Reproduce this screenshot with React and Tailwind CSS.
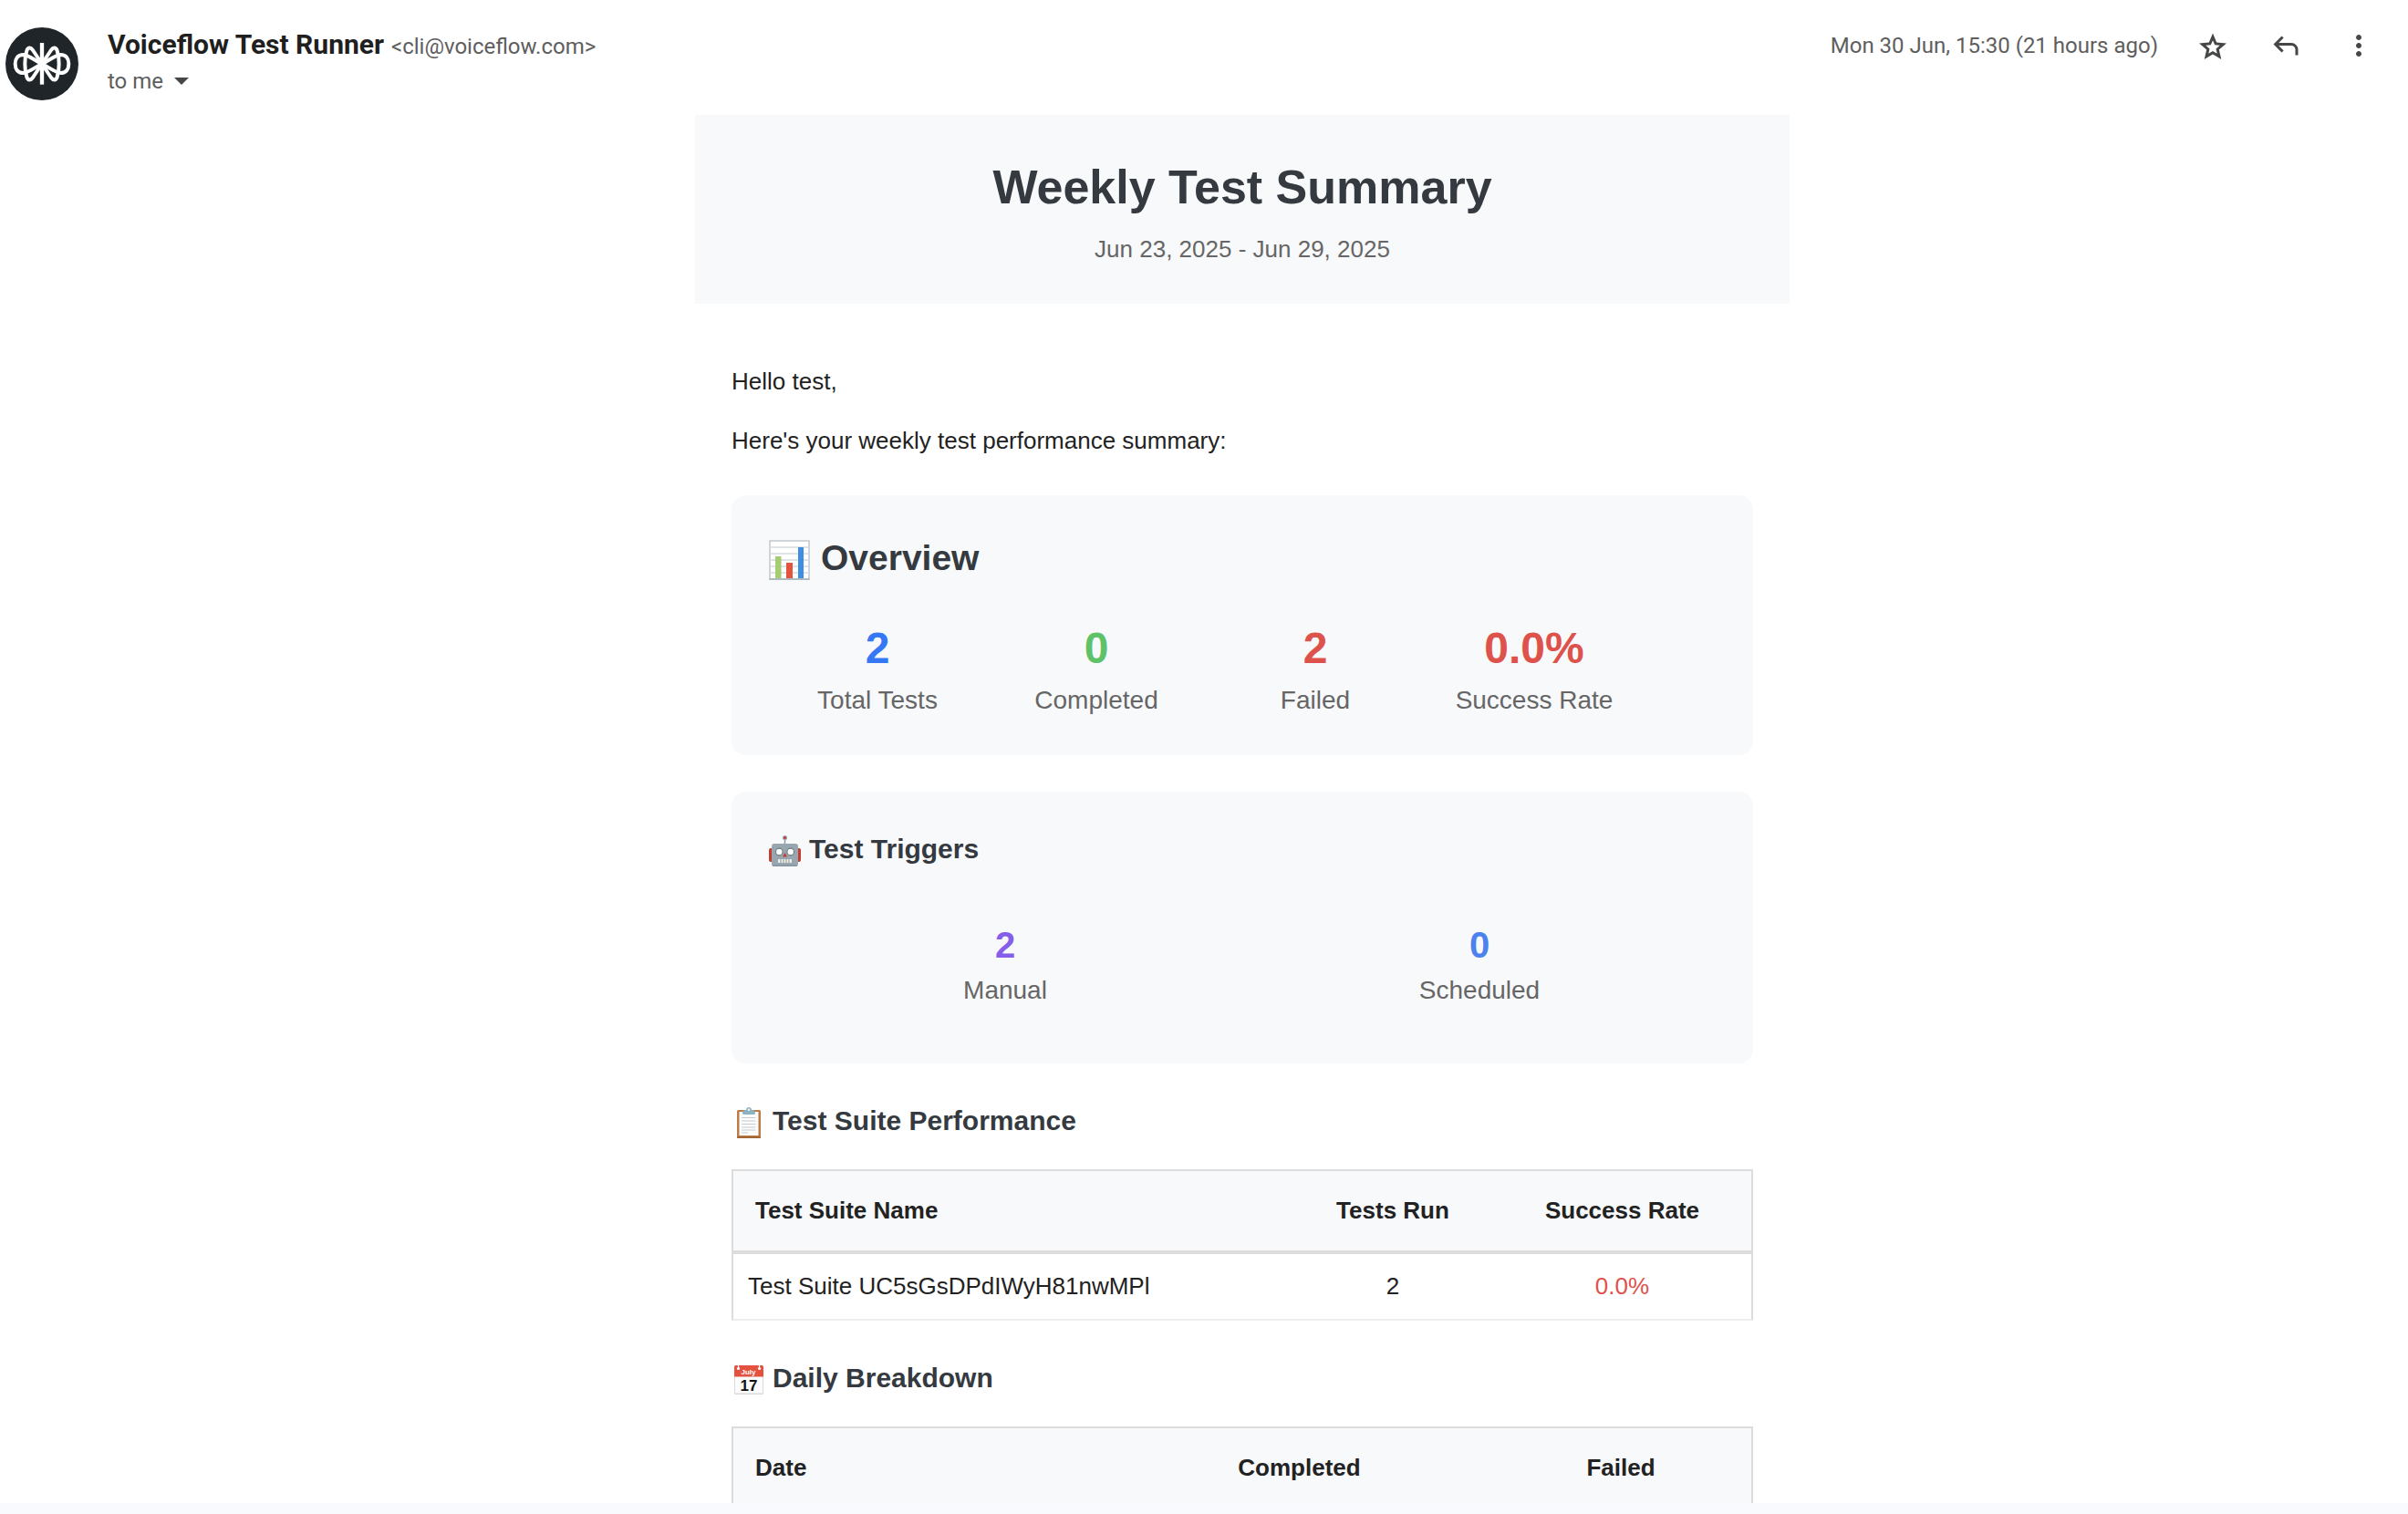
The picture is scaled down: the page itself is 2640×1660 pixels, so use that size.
const overview = [
  { value: '2', label: 'Total Tests', color: 'text-[#3578f6]' },
  { value: '0', label: 'Completed', color: 'text-[#5ec269]' },
  { value: '2', label: 'Failed', color: 'text-[#de524c]' },
  { value: '0.0%', label: 'Success Rate', color: 'text-[#de524c]' },
];

const triggers = [
  { value: '2', label: 'Manual', color: 'text-[#855eea]' },
  { value: '0', label: 'Scheduled', color: 'text-[#4b82ee]' },
];

function Avatar() {
  return (
    <svg viewBox="18 30 240 240" className="size-20 shrink-0" role="img" aria-label="Voiceflow">
      <circle cx="138" cy="150" r="120" fill="#1f2529" />
      <g fill="none" stroke="#fff" strokeWidth="12" strokeLinejoin="round">
        <path d="M138 81V218" strokeWidth="13" />
        <path d="M138 150C119 142 96 122 77 120C58 120 50 134 50 150C50 167 58 180 77 180C96 178 119 159 138 150" />
        <path d="M138 150C157 142 180 122 199 120C218 120 226 134 226 150C226 167 218 180 199 180C180 178 157 159 138 150" />
        <path d="M138 150L108 105C100 94 92 96 88 107C80 132 80 168 88 193C92 205 100 206 108 195L138 150" />
        <path d="M138 150L168 105C176 94 184 96 188 107C196 132 196 168 188 193C184 205 176 206 168 195L138 150" />
      </g>
    </svg>
  );
}

function ChartIcon() {
  return (
    <svg viewBox="0 0 47 47" className="mt-1 size-[47px]" aria-hidden="true">
      <rect x="2" y="2" width="43" height="42" fill="#fff" stroke="#bcc6cc" strokeWidth="1.4" />
      <path d="M2 9H45M2 16H45M2 23H45M2 30H45M2 37H45" stroke="#d5dbdf" strokeWidth="1.4" />
      <rect x="8" y="19" width="6.5" height="24" fill="#a5cb73" />
      <rect x="20" y="26" width="7" height="17" fill="#e4533f" />
      <rect x="33" y="9" width="6" height="34" fill="#3f8fe0" />
      <path d="M1.5 44H45.5" stroke="#aebbc2" strokeWidth="1.8" />
    </svg>
  );
}

function RobotIcon() {
  return (
    <svg viewBox="0 0 37 37" className="mt-1 size-[37px]" aria-hidden="true">
      <rect x="1" y="16" width="5" height="15" rx="2" fill="#c53c33" />
      <rect x="31" y="16" width="5" height="15" rx="2" fill="#c53c33" />
      <path d="M18.5 4V12" stroke="#8f9ea8" strokeWidth="1.5" />
      <circle cx="18.5" cy="4.5" r="2.6" fill="#9cabb4" />
      <circle cx="18.5" cy="4.5" r="1.5" fill="#c53c33" />
      <rect x="4" y="11" width="29" height="25" rx="3" fill="#97a6af" />
      <path d="M5 35H32" stroke="#82929b" strokeWidth="1.2" />
      <circle cx="12.3" cy="20" r="3.8" fill="#fff" stroke="#6e7b82" strokeWidth="1.2" />
      <circle cx="24.7" cy="20" r="3.8" fill="#fff" stroke="#6e7b82" strokeWidth="1.2" />
      <path d="M18.5 21L21 25.5H16Z" fill="#c53c33" />
      <rect x="11" y="28" width="15" height="4" rx="1" fill="#f0efea" />
      <path d="M14 28V32M17 28V32M20 28V32M23 28V32" stroke="#8a979e" strokeWidth="1" />
    </svg>
  );
}

function ClipboardIcon() {
  return (
    <svg viewBox="0 0 37 37" className="mt-1 size-[37px]" aria-hidden="true">
      <rect x="6" y="5" width="26" height="31" rx="1.5" fill="#bd7b45" />
      <path d="M6 35H32" stroke="#9b5f30" strokeWidth="1.5" />
      <rect x="8.5" y="7" width="21" height="26" fill="#fbfcfc" />
      <path d="M11 13.5H26.5M11 17H26.5M11 20.5H26.5M11 24H26.5M11 27H26.5M11 30H18" stroke="#c5cbd0" strokeWidth="1.2" />
      <path d="M12 8.500C12 5.500 14 5 16 5C16 1 22 1 22 5C24 5 26 5.500 26 8.500C26 10 25 10 24 10H14C13 10 12 10 12 8.500Z" fill="#8db3c2" />
      <circle cx="19" cy="4.8" r="1.2" fill="#eff5f7" />
    </svg>
  );
}

function CalendarIcon() {
  return (
    <svg viewBox="0 0 37 37" className="mt-1 size-[37px]" aria-hidden="true">
      <rect x="3" y="3" width="32" height="32" rx="1.5" fill="#d9dadb" />
      <rect x="4" y="4" width="30" height="29.5" fill="#fcfcfc" />
      <path d="M3 5Q3 3 5 3H33Q35 3 35 5V15.500H3Z" fill="#e4513f" />
      <circle cx="7.5" cy="6.5" r="1.6" fill="#fff" />
      <circle cx="30.5" cy="6.5" r="1.6" fill="#fff" />
      <path d="M7.5 2.5V6.5M30.5 2.5V6.5" stroke="#fff" strokeWidth="1.2" />
      <text x="18.5" y="12.5" textAnchor="middle" fontSize="8" fontWeight="700" fill="#fff">July</text>
      <text x="19" y="31" textAnchor="middle" fontSize="17" fontWeight="700" fill="#111">17</text>
    </svg>
  );
}

function IconButton({ label, path }) {
  return (
    <button type="button" aria-label={label} className="flex h-10 w-20 items-center justify-center">
      <svg viewBox="0 -960 960 960" className="size-9" fill="#444746" aria-hidden="true">
        <path d={path} />
      </svg>
    </button>
  );
}

function SectionHeading({ icon, children }) {
  return (
    <h3 className="flex h-[45px] items-center gap-2 text-[30px] font-bold leading-[45px] text-[#343a40]">
      {icon}
      {children}
    </h3>
  );
}

function HeaderRow({ labels }) {
  return (
    <thead>
      <tr className="h-[91px] bg-[#f8f9fb]">
        {labels.map((l, i) => (
          <th key={l} scope="col" className={i === 0 ? 'px-6 text-left' : 'px-6 text-center'}>
            {l}
          </th>
        ))}
      </tr>
    </thead>
  );
}

const tableClass =
  'mt-[31px] w-full table-fixed border-separate border-spacing-0 border-2 border-b-[#eeeeee] border-[#dcdcdc] text-[26px] leading-[39px] [&_th]:border-b-4 [&_th]:border-[#dcdcdc]';

export default function App() {
  return (
    <div className="flex h-screen flex-col overflow-hidden bg-white font-['Liberation_Sans',Arial,sans-serif] text-[#222]">
      <main className="min-h-0 flex-1 overflow-hidden">
        <header className="flex h-[126px] items-start gap-8 pl-1.5 pr-3.5 pt-[30px] font-['Roboto',sans-serif] text-[24px] leading-10 text-[#5e5e5e]">
          <Avatar />
          <div className="flex-1">
            <div className="flex h-10 items-baseline gap-2 leading-[38px]">
              <span className="text-[30px] font-bold text-[#1f1f1f]">Voiceflow Test Runner</span>
              <span>&lt;cli@voiceflow.com&gt;</span>
            </div>
            <button type="button" className="flex items-center gap-3 leading-[38px]">
              to me
              <svg viewBox="0 0 16 8" className="h-2 w-4" fill="#444746" aria-hidden="true">
                <path d="M0 0H16L8 8Z" />
              </svg>
            </button>
          </div>
          <div className="flex items-center">
            <time className="mr-5">Mon 30 Jun, 15:30 (21 hours ago)</time>
            <IconButton
              label="Star"
              path="m354-247 126-76 126 77-33-144 111-96-146-13-58-136-58 135-146 13 111 97-33 143ZM233-80l65-281L80-550l288-25 112-265 112 265 288 25-218 189 65 281-247-149L233-80Z"
            />
            <IconButton
              label="Reply"
              path="M760-200v-160q0-50-35-85t-85-35H273l144 144-57 56-240-240 240-240 57 56-144 144h367q83 0 141.500 58.500T840-360v160h-80Z"
            />
            <IconButton
              label="More"
              path="M480-160q-33 0-56.500-23.500T400-240q0-33 23.500-56.500T480-320q33 0 56.500 23.500T560-240q0 33-23.500 56.500T480-160Zm0-240q-33 0-56.500-23.500T400-480q0-33 23.500-56.500T480-560q33 0 56.500 23.500T560-480q0 33-23.500 56.500T480-400Zm0-240q-33 0-56.500-23.500T400-720q0-33 23.500-56.500T480-800q33 0 56.500 23.500T560-720q0 33-23.500 56.500T480-640Z"
            />
          </div>
        </header>

        <div className="pl-[84px]">
          <article className="mx-auto max-w-[1200px] text-[26px] leading-[39px]">
            <div className="bg-[#f8f9fb] p-10 text-center">
              <h1 className="text-[52px] font-bold leading-[78px] text-[#343a40]">Weekly Test Summary</h1>
              <p className="mt-2.5 leading-[39px] text-[#666]">Jun 23, 2025 - Jun 29, 2025</p>
            </div>

            <div className="px-10 pt-[66px]">
              <p>Hello test,</p>
              <p className="mt-[26px]">Here's your weekly test performance summary:</p>

              <section className="mt-10 rounded-2xl bg-[#f8f9fb] p-10">
                <h2 className="flex h-[58px] items-center gap-[11px] text-[39px] font-bold leading-[58px] text-[#343a40]">
                  <ChartIcon />
                  Overview
                </h2>
                <dl className="mt-[34px] flex">
                  {overview.map((s) => (
                    <div key={s.label} className="flex w-60 flex-col-reverse text-center">
                      <dt className="text-[28px] leading-[41px] text-[#666]">{s.label}</dt>
                      <dd className={`text-[48px] font-bold leading-[72px] ${s.color}`}>{s.value}</dd>
                    </div>
                  ))}
                </dl>
              </section>

              <section className="mt-10 rounded-2xl bg-[#f8f9fb] px-10 pb-[60px] pt-10">
                <SectionHeading icon={<RobotIcon />}>Test Triggers</SectionHeading>
                <dl className="mt-[54px] grid grid-cols-2">
                  {triggers.map((s) => (
                    <div key={s.label} className="flex flex-col-reverse text-center">
                      <dt className="text-[28px] leading-[41px] text-[#666]">{s.label}</dt>
                      <dd className={`text-[40px] font-bold leading-[58px] ${s.color}`}>{s.value}</dd>
                    </div>
                  ))}
                </dl>
              </section>

              <section className="mt-10">
                <SectionHeading icon={<ClipboardIcon />}>Test Suite Performance</SectionHeading>
                <table className={tableClass}>
                  <colgroup>
                    <col />
                    <col className="w-[220px]" />
                    <col className="w-[283px]" />
                  </colgroup>
                  <HeaderRow labels={['Test Suite Name', 'Tests Run', 'Success Rate']} />
                  <tbody>
                    <tr className="h-[71px]">
                      <td className="px-4">Test Suite UC5sGsDPdIWyH81nwMPl</td>
                      <td className="px-4 text-center">2</td>
                      <td className="px-4 text-center text-[#de524c]">0.0%</td>
                    </tr>
                  </tbody>
                </table>
              </section>

              <section className="mt-10">
                <SectionHeading icon={<CalendarIcon />}>Daily Breakdown</SectionHeading>
                <table className={tableClass}>
                  <colgroup>
                    <col />
                    <col className="w-[419px]" />
                    <col className="w-[286px]" />
                  </colgroup>
                  <HeaderRow labels={['Date', 'Completed', 'Failed']} />
                </table>
              </section>
            </div>
          </article>
        </div>
      </main>
      <div className="h-3 shrink-0 bg-[#f8fafd]" />
    </div>
  );
}
